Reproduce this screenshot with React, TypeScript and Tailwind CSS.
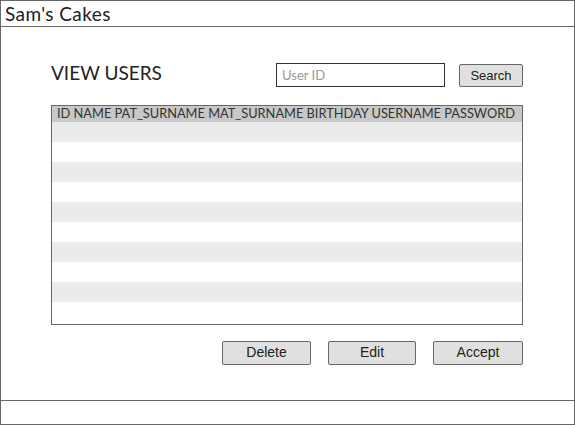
const rows = Array.from({ length: 10 }, (_, i) => i);

export default function App() {
  return (
    <div className="w-[575px] h-[425px] bg-white flex flex-col border border-[#666] font-['Liberation_Sans',sans-serif] text-[#222]">
      <div className="h-[26px] border-b border-[#666] px-[4px] flex items-center">
        <span className="text-[19px] leading-none font-['Lato',sans-serif] tracking-[0.4px]">Sam's Cakes</span>
      </div>

      <main className="flex-1 pl-[50px] pr-[51px] pt-[36px]">
        <div className="flex items-center">
          <h1 className="text-[19px] font-['Lato',sans-serif] mt-[-4px]">VIEW USERS</h1>
          <input
            className="ml-auto w-[169px] h-[24px] border border-[#333] px-[5px] text-[13px] font-['Lato',sans-serif] placeholder:text-[#999] outline-none"
            placeholder="User ID"
          />
          <button className="ml-[14px] w-[64px] h-[23px] border border-[#666] rounded-[2px] bg-[#e0e0e0] text-[13px]">
            Search
          </button>
        </div>

        <div className="mt-[17px] border border-[#666] h-[220px] overflow-hidden">
          <div className="h-[16px] bg-[#c8c8c8] px-[5px] flex items-center text-[12.8px] font-['Lato',sans-serif] text-[#333] whitespace-nowrap">
            ID NAME PAT_SURNAME MAT_SURNAME BIRTHDAY USERNAME PASSWORD
          </div>
          {rows.map((i) => (
            <div key={i} className={`h-[20px] ${i % 2 === 0 ? "bg-[#ebebeb]" : "bg-white"}`} />
          ))}
        </div>

        <div className="mt-[16px] flex justify-end gap-[17px]">
          <button className="w-[89px] h-[24px] border border-[#666] rounded-[2px] bg-[#e0e0e0] text-[14px]">Delete</button>
          <button className="w-[88px] h-[24px] border border-[#666] rounded-[2px] bg-[#e0e0e0] text-[14px]">Edit</button>
          <button className="w-[90px] h-[24px] border border-[#666] rounded-[2px] bg-[#e0e0e0] text-[14px]">Accept</button>
        </div>
      </main>

      <div className="h-[24px] border-t border-[#666]" />
    </div>
  );
}
